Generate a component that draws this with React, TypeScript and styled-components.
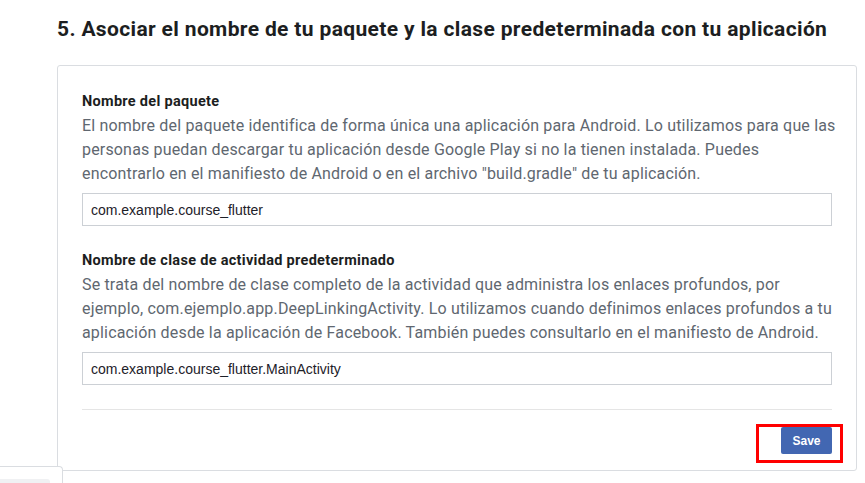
import React from 'react';
import styled, { createGlobalStyle } from 'styled-components';

const GlobalStyle = createGlobalStyle`
  html, body {
    margin: 0;
    padding: 0;
    background: #ffffff;
  }
  body {
    font-family: Roboto, "Liberation Sans", sans-serif;
    overflow: hidden;
  }
`;

const Page = styled.div`
  position: relative;
  width: 865px;
  height: 483px;
  padding: 17px 0 0 57px;
  box-sizing: border-box;
`;

const Heading = styled.h2`
  margin: 0;
  font-family: Roboto, "Liberation Sans", sans-serif;
  font-size: 21px;
  line-height: 24px;
  font-weight: 700;
  letter-spacing: 0.35px;
  color: #1c1e21;
  white-space: nowrap;
`;

const Card = styled.div`
  margin-top: 24px;
  width: 800px;
  height: 406px;
  box-sizing: border-box;
  border: 1px solid #dadde1;
  border-radius: 3px;
  padding: 26px 24px 0 24px;
`;

const Field = styled.div<{ $gap?: number }>`
  margin-top: ${({ $gap }) => $gap ?? 0}px;
  width: 750px;
`;

const Label = styled.div`
  font-size: 14.5px;
  line-height: 20px;
  font-weight: 700;
  letter-spacing: 0.3px;
  color: #1c1e21;
`;

const Desc = styled.p`
  margin: 2px 0 0;
  font-size: 16px;
  line-height: 24px;
  letter-spacing: 0.17px;
  color: #606770;
`;

const DescLine = styled.span`
  display: block;
  white-space: nowrap;
`;

const Input = styled.input`
  display: block;
  margin-top: 7px;
  width: 750px;
  height: 33px;
  box-sizing: border-box;
  border: 1px solid #ccd0d5;
  border-radius: 0;
  padding: 0 8px;
  font-family: "Liberation Sans", Arial, sans-serif;
  font-size: 14px;
  color: #1d2129;
  outline: none;
`;

const Divider = styled.hr`
  margin: 24px 0 0;
  width: 750px;
  border: none;
  border-top: 1px solid #e5e5e5;
`;

const Footer = styled.div`
  display: flex;
  justify-content: flex-end;
  width: 750px;
  margin-top: 17px;
`;

const SaveWrap = styled.div`
  position: relative;
`;

const SaveButton = styled.button`
  display: block;
  width: 51px;
  height: 27px;
  border: none;
  border-radius: 2px;
  background: #4267b2;
  color: #ffffff;
  font-family: "Liberation Sans", Arial, sans-serif;
  font-size: 12px;
  font-weight: 700;
  cursor: pointer;
`;

const Highlight = styled.div`
  position: absolute;
  left: -25px;
  top: -3px;
  right: -11px;
  bottom: -9px;
  border: 3px solid #ff0000;
  pointer-events: none;
`;

const Corner = styled.div`
  position: absolute;
  left: 0;
  bottom: 0;
  width: 63px;
  height: 17px;
  box-sizing: border-box;
  background: #ffffff;
  border-top: 1px solid #dadde1;
  border-right: 1px solid #dadde1;
  border-top-right-radius: 4px;
`;

const CornerBar = styled.div`
  position: absolute;
  left: 0;
  bottom: 0;
  width: 50px;
  height: 4px;
  background: #f0f1f3;
  border-top-right-radius: 3px;
`;

const packageLines = [
  'El nombre del paquete identifica de forma única una aplicación para Android. Lo utilizamos para que las',
  'personas puedan descargar tu aplicación desde Google Play si no la tienen instalada. Puedes',
  'encontrarlo en el manifiesto de Android o en el archivo "build.gradle" de tu aplicación.',
];

const classLines = [
  'Se trata del nombre de clase completo de la actividad que administra los enlaces profundos, por',
  'ejemplo, com.ejemplo.app.DeepLinkingActivity. Lo utilizamos cuando definimos enlaces profundos a tu',
  'aplicación desde la aplicación de Facebook. También puedes consultarlo en el manifiesto de Android.',
];

export default function App() {
  return (
    <>
      <GlobalStyle />
      <Page>
        <Heading>5. Asociar el nombre de tu paquete y la clase predeterminada con tu aplicación</Heading>
        <Card>
          <Field>
            <Label>Nombre del paquete</Label>
            <Desc>
              {packageLines.map((l) => (
                <DescLine key={l}>{l}</DescLine>
              ))}
            </Desc>
            <Input defaultValue="com.example.course_flutter" />
          </Field>
          <Field $gap={25}>
            <Label>Nombre de clase de actividad predeterminado</Label>
            <Desc>
              {classLines.map((l) => (
                <DescLine key={l}>{l}</DescLine>
              ))}
            </Desc>
            <Input defaultValue="com.example.course_flutter.MainActivity" />
          </Field>
          <Divider />
          <Footer>
            <SaveWrap>
              <SaveButton>Save</SaveButton>
              <Highlight />
            </SaveWrap>
          </Footer>
        </Card>
        <Corner>
          <CornerBar />
        </Corner>
      </Page>
    </>
  );
}
